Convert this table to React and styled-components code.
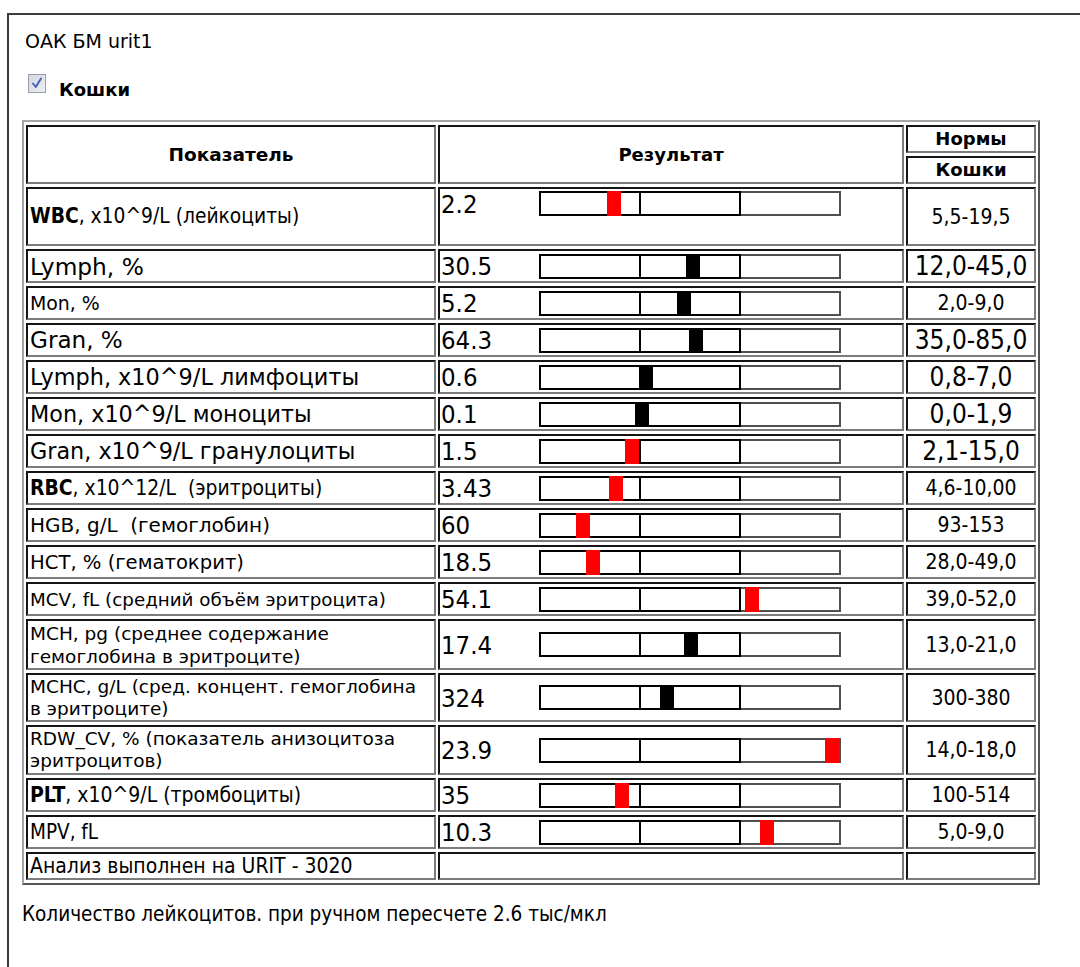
import React from "react";
import styled, { createGlobalStyle } from "styled-components";

const WIDE = `"DejaVu Sans", Verdana, sans-serif`;
const NARROW = `"DejaVu Sans Condensed", "Liberation Sans", Tahoma, sans-serif`;

const GlobalStyle = createGlobalStyle`
  html, body {
    margin: 0;
    padding: 0;
    background: #ffffff;
    overflow: hidden;
  }
  body {
    font-family: ${WIDE};
    color: #000000;
  }
`;

const Frame = styled.div`
  box-sizing: border-box;
  margin: 13px 0 0 7px;
  width: 1100px;
  height: 1000px;
  border-left: 2px solid #3d3d3d;
  border-top: 2px solid #3d3d3d;
  padding-left: 13px;
`;

const Title = styled.div`
  margin-top: 15px;
  padding-left: 3px;
  font-size: 19px;
  line-height: 22px;
`;

const CheckRow = styled.div`
  display: flex;
  align-items: flex-start;
  margin-top: 22px;
  padding-left: 6px;
`;

const CheckLabel = styled.span`
  margin: 4px 0 0 13px;
  font-size: 18px;
  font-weight: 700;
  line-height: 24px;
`;

const Grid = styled.table`
  margin-top: 18px;
  width: 1018px;
  table-layout: fixed;
  border-collapse: separate;
  border-spacing: 2px 3px;
  border: 2px solid;
  border-color: #a6a6a6 #555555 #555555 #a6a6a6;
`;

const Row = styled.tr`
  height: ${(p) => p.$h}px;
`;

const Cell = styled.td`
  border: 2px solid;
  border-color: #151515 #7c7c7c #7c7c7c #151515;
  padding: 0 ${(p) => (p.$pad != null ? p.$pad : 2)}px;
  font-family: ${(p) => (p.$narrow ? NARROW : WIDE)};
  font-size: ${(p) => p.$size || 18.7}px;
  font-weight: ${(p) => (p.$bold ? 700 : 400)};
  line-height: ${(p) => p.$lh || "26px"};
  text-align: ${(p) => p.$align || "left"};
  vertical-align: ${(p) => (p.$top ? "top" : "middle")};
  white-space: nowrap;
  overflow: hidden;
`;

const ResultLine = styled.div`
  display: flex;
  align-items: ${(p) => (p.$top ? "flex-start" : "center")};
`;

const Value = styled.span`
  width: 98px;
  flex: none;
  font-family: ${NARROW};
  font-size: 25.5px;
  line-height: ${(p) => (p.$top ? "30px" : "28px")};
`;

const Bar = styled.div`
  position: relative;
  display: flex;
  height: 25px;
  margin-top: ${(p) => (p.$top ? 2 : 0)}px;
`;

const Segment = styled.div`
  box-sizing: border-box;
  width: ${(p) => (p.$first ? 102 : 100)}px;
  height: 100%;
  border: 2px solid ${(p) => (p.$dim ? "#505050" : "#000000")};
  border-left: ${(p) => (p.$first ? "2px solid #000000" : "none")};
  background: #ffffff;
`;

const Marker = styled.div`
  position: absolute;
  top: 0;
  width: 14px;
  height: 100%;
  background: ${(p) => (p.$red ? "#ff0000" : "#000000")};
`;

const Note = styled.div`
  margin-top: 17px;
  font-family: ${NARROW};
  font-size: 20.5px;
  line-height: 24px;
`;

const BAR_X = 539;

const rows = [
  { label: <><b>WBC</b>, x10^9/L (лейкоциты)</>, narrow: true, ls: 20.8, value: "2.2", norm: "5,5-19,5", ns: 21, mark: 607, red: true, h: 59, top: true },
  { label: "Lymph, %", ls: 23.3, value: "30.5", norm: "12,0-45,0", ns: 26, mark: 686 },
  { label: "Mon, %", ls: 18.9, value: "5.2", norm: "2,0-9,0", ns: 21, mark: 677 },
  { label: "Gran, %", ls: 23.1, value: "64.3", norm: "35,0-85,0", ns: 26, mark: 689 },
  { label: "Lymph, x10^9/L лимфоциты", ls: 22.4, value: "0.6", norm: "0,8-7,0", ns: 26, mark: 639 },
  { label: "Mon, x10^9/L моноциты", ls: 22.3, value: "0.1", norm: "0,0-1,9", ns: 26, mark: 635 },
  { label: "Gran, x10^9/L гранулоциты", ls: 22.3, value: "1.5", norm: "2,1-15,0", ns: 26, mark: 625, red: true },
  { label: <><b>RBC</b>, x10^12/L&nbsp; (эритроциты)</>, narrow: true, ls: 20.9, value: "3.43", norm: "4,6-10,00", ns: 21, mark: 609, red: true },
  { label: "HGB, g/L\u00a0 (гемоглобин)", ls: 20, value: "60", norm: "93-153", ns: 21, mark: 576, red: true },
  { label: "HCT, % (гематокрит)", ls: 19.6, value: "18.5", norm: "28,0-49,0", ns: 21, mark: 586, red: true },
  { label: "MCV, fL (средний объём эритроцита)", ls: 18.3, value: "54.1", norm: "39,0-52,0", ns: 21, mark: 745, red: true },
  { label: <>MCH, pg (среднее содержание<br />гемоглобина в эритроците)</>, ls: 18.5, value: "17.4", norm: "13,0-21,0", ns: 21, mark: 684, h: 51, lh: "23px" },
  { label: <>MCHC, g/L (сред. концент. гемоглобина<br />в эритроците)</>, ls: 18.5, value: "324", norm: "300-380", ns: 21, mark: 660, h: 49, lh: "22px" },
  { label: <>RDW_CV, % (показатель анизоцитоза<br />эритроцитов)</>, ls: 18.5, value: "23.9", norm: "14,0-18,0", ns: 21, mark: 825, red: true, h: 50, lh: "22.5px" },
  { label: <><b>PLT</b>, x10^9/L (тромбоциты)</>, narrow: true, ls: 21, value: "35", norm: "100-514", ns: 21, mark: 615, red: true },
  { label: "MPV, fL", narrow: true, ls: 20.5, value: "10.3", norm: "5,0-9,0", ns: 21, mark: 760, red: true },
];

function Result({ row }) {
  return (
    <ResultLine $top={row.top}>
      <Value $top={row.top}>{row.value}</Value>
      <Bar $top={row.top}>
        <Segment $first />
        <Segment />
        <Segment $dim />
        <Marker $red={row.red} style={{ left: row.mark - BAR_X }} />
      </Bar>
    </ResultLine>
  );
}

function Checkbox() {
  return (
    <svg width="18" height="19" viewBox="0 0 18 19">
      <defs>
        <linearGradient id="cbFill" x1="0" y1="0" x2="1" y2="1">
          <stop offset="0" stopColor="#d3d7e0" />
          <stop offset="1" stopColor="#eef0f4" />
        </linearGradient>
      </defs>
      <rect x="0.5" y="0.5" width="17" height="18" fill="url(#cbFill)" stroke="#9a9ea8" />
      <path d="M5 9.5 L7.8 13 L13 4.5" fill="none" stroke="#4a63b5" strokeWidth="2" strokeLinecap="round" strokeLinejoin="round" />
    </svg>
  );
}

export default function App() {
  return (
    <>
      <GlobalStyle />
      <Frame>
        <Title>ОАК БМ urit1</Title>
        <CheckRow>
          <Checkbox />
          <CheckLabel>Кошки</CheckLabel>
        </CheckRow>
        <Grid>
          <colgroup>
            <col style={{ width: 410 }} />
            <col style={{ width: 466 }} />
            <col style={{ width: 130 }} />
          </colgroup>
          <tbody>
            <Row $h={28}>
              <Cell rowSpan={2} $bold $size={18.5} $align="center">Показатель</Cell>
              <Cell rowSpan={2} $bold $size={18} $align="center">Результат</Cell>
              <Cell $bold $size={18} $align="center" $lh="22px">Нормы</Cell>
            </Row>
            <Row $h={28}>
              <Cell $bold $size={18} $align="center" $lh="22px">Кошки</Cell>
            </Row>
            {rows.map((row, i) => (
              <Row key={i} $h={row.h || 34}>
                <Cell $narrow={row.narrow} $size={row.ls} $lh={row.lh || "27px"}>
                  {row.label}
                </Cell>
                <Cell $pad={1} $top={row.top}>
                  <Result row={row} />
                </Cell>
                <Cell $narrow $size={row.ns} $align="center" $lh="28px">{row.norm}</Cell>
              </Row>
            ))}
            <Row $h={28}>
              <Cell $narrow $size={21} $lh="24px">Анализ выполнен на URIT - 3020</Cell>
              <Cell />
              <Cell />
            </Row>
          </tbody>
        </Grid>
        <Note>Количество лейкоцитов. при ручном пересчете 2.6 тыс/мкл</Note>
      </Frame>
    </>
  );
}
